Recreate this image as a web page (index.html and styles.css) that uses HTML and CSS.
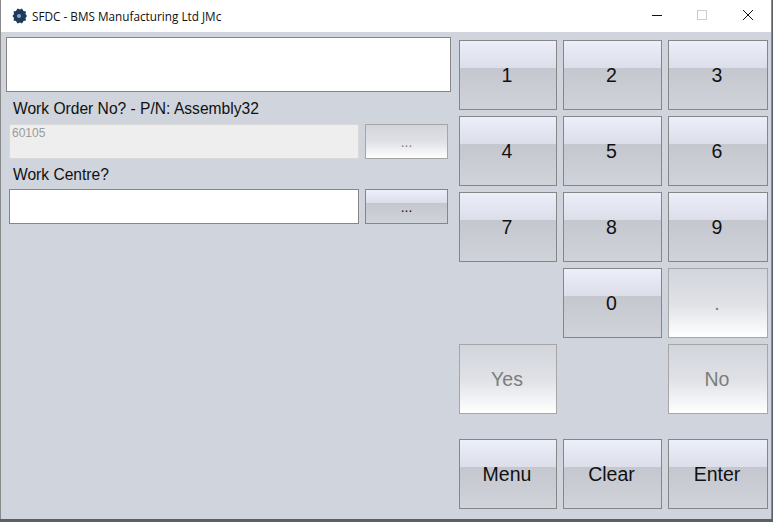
FILE: index.html
```html
<!DOCTYPE html>
<html lang="en">
  <head>
    <meta charset="UTF-8" />
    <meta name="viewport" content="width=device-width, initial-scale=1.0" />
    <title>SFDC - BMS Manufacturing Ltd JMc</title>
    <link rel="stylesheet" href="styles.css">
  </head>
  <body>
    <div class="window">
      <div class="title-bar">
        <svg class="app-icon" width="16" height="16" viewBox="0 0 16 16">
          <path fill="#1d3a5c" d="M6.500 0.500l2.500 1 2-1 1.500 2.500 2.500.5-.5 2.500 1.500 2-1.500 2 .5 2.500-2.500.5-1.500 2.500-2-1-2.500 1-1.500-2.500-2.500-.5.5-2.500-1.500-2 1.500-2-.5-2.500 2.500-.5z" />
          <circle cx="8" cy="8" r="2" fill="#8fa6bf" />
        </svg>
        <span class="title-text">SFDC - BMS Manufacturing Ltd JMc</span>
        <div class="window-controls">
          <svg class="control" width="46" height="32" viewBox="0 0 46 32">
            <path d="M19 15.500h10" stroke="#111" fill="none" />
          </svg>
          <svg class="control" width="46" height="32" viewBox="0 0 46 32">
            <rect x="18.500" y="10.500" width="9" height="9" stroke="#ccc" fill="none" />
          </svg>
          <svg class="control" width="46" height="32" viewBox="0 0 46 32">
            <path d="M18 10l10 10M28 10l-10 10" stroke="#111" fill="none" />
          </svg>
        </div>
      </div>

      <div class="content">
        <div class="left-pane">
          <div class="message-box"></div>
          <label class="field-label first-label">Work Order No? - P/N: Assembly32</label>
          <div class="field-row">
            <div class="text-field disabled">60105</div>
            <button class="key small-key off">...</button>
          </div>
          <label class="field-label">Work Centre?</label>
          <div class="field-row">
            <div class="text-field"></div>
            <button class="key small-key">...</button>
          </div>
        </div>

        <div class="keypad">
          <button class="key">1</button>
          <button class="key">2</button>
          <button class="key">3</button>
          <button class="key">4</button>
          <button class="key">5</button>
          <button class="key">6</button>
          <button class="key">7</button>
          <button class="key">8</button>
          <button class="key">9</button>
          <div></div>
          <button class="key">0</button>
          <button class="key off">.</button>
          <button class="key off">Yes</button>
          <div></div>
          <button class="key off">No</button>
          <button class="key action">Menu</button>
          <button class="key action">Clear</button>
          <button class="key action">Enter</button>
        </div>
      </div>
    </div>
  </body>
</html>
```

FILE: styles.css
```css
* {
  margin: 0;
  padding: 0;
  box-sizing: border-box;
}

html,
body {
  height: 100%;
  overflow: hidden;
}

body {
  background: #5a6064;
  font-family: "Liberation Sans", Arial, sans-serif;
  color: #111;
}

.window {
  width: 772px;
  height: 519px;
  display: flex;
  flex-direction: column;
  background: #d0d4dc;
  border-left: 1px solid #8a8a8a;
  border-right: 1px solid #8a8a8a;
}

.title-bar {
  height: 32px;
  flex-shrink: 0;
  display: flex;
  align-items: center;
  background: #ffffff;
  padding-left: 10px;
}

.app-icon {
  margin-right: 5px;
}

.title-text {
  font-family: "Open Sans", "Noto Sans", sans-serif;
  font-size: 11.75px;
  color: #111;
}

.window-controls {
  margin-left: auto;
  display: flex;
}

.control {
  display: block;
}

.content {
  flex: 1;
  display: flex;
  padding: 5px 2px 0 5px;
}

.left-pane {
  width: 445px;
  margin-right: 8px;
  display: flex;
  flex-direction: column;
}

.message-box {
  height: 55px;
  background: #ffffff;
  border: 1px solid #868686;
}

.field-label {
  font-size: 15.6px;
  line-height: 18px;
  margin: 7px 0 5px 7px;
}

.first-label {
  margin-top: 8px;
  margin-bottom: 6px;
}

.field-row {
  display: flex;
  gap: 6px;
  margin-left: 3px;
  margin-right: 3px;
}

.text-field {
  width: 350px;
  height: 35px;
  background: #ffffff;
  border: 1px solid #868686;
  font-size: 12px;
  padding: 1px 2px;
}

.text-field.disabled {
  background: #eeeeee;
  border-color: #d9d9d9;
  color: #9a9a9a;
}

.keypad {
  display: grid;
  grid-template-columns: 98px 99px 100px;
  grid-template-rows: repeat(5, 70px) 70px;
  column-gap: 6px;
  row-gap: 6px;
  margin-top: 3px;
}

.key {
  font-family: "Liberation Sans", Arial, sans-serif;
  font-size: 19.5px;
  color: #111;
  padding: 0 2px 0 0;
  border: 1px solid #868686;
  background: linear-gradient(#eceefa 0%, #dcdfea 39%, #c5c7cf 40%, #d1d3db 100%);
}

.key.off {
  color: #7c7c7c;
  border-color: #a6a6a6;
  background: linear-gradient(#d2d5dc 0%, #dfe1e6 50%, #ffffff 100%);
}

.small-key {
  width: 83px;
  height: 35px;
  font-size: 14px;
  padding-right: 0;
}

.action {
  margin-top: 19px;
  height: 70px;
}
```
